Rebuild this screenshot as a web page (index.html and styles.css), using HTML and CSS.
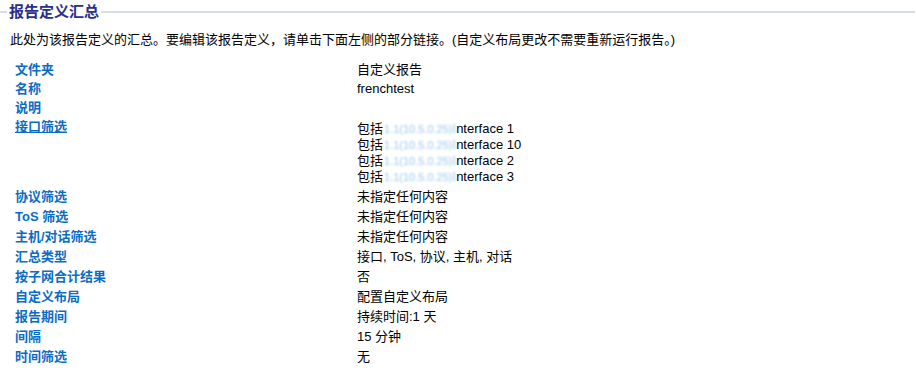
FILE: index.html
```html
<!DOCTYPE html>
<html lang="zh-CN">
<head>
<meta charset="utf-8">
<title>报告定义汇总</title>
<link rel="stylesheet" href="styles.css">
</head>
<body>
<div class="header">
  <span class="rule rule-left"></span>
  <h1 class="title">报告定义汇总</h1>
  <span class="rule rule-right"></span>
</div>
<p class="intro">此处为该报告定义的汇总。要编辑该报告定义，请单击下面左侧的部分链接。(自定义布局更改不需要重新运行报告。)</p>
<div class="summary">
  <div class="row row-tight"><div class="label">文件夹</div><div class="value">自定义报告</div></div>
  <div class="row row-tight"><div class="label">名称</div><div class="value">frenchtest</div></div>
  <div class="row row-tight"><div class="label">说明</div><div class="value"></div></div>
  <div class="row"><div class="label"><a class="link" href="#">接口筛选</a></div>
    <div class="value list">
      <div>包括<span class="blur">1.1(10.5.0.25)</span><span class="blur-edge">I</span>nterface 1</div>
      <div>包括<span class="blur">1.1(10.5.0.25)</span><span class="blur-edge">I</span>nterface 10</div>
      <div>包括<span class="blur">1.1(10.5.0.25)</span><span class="blur-edge">I</span>nterface 2</div>
      <div>包括<span class="blur">1.1(10.5.0.25)</span><span class="blur-edge">I</span>nterface 3</div>
    </div>
  </div>
  <div class="row"><div class="label">协议筛选</div><div class="value">未指定任何内容</div></div>
  <div class="row"><div class="label">ToS 筛选</div><div class="value">未指定任何内容</div></div>
  <div class="row"><div class="label">主机/对话筛选</div><div class="value">未指定任何内容</div></div>
  <div class="row"><div class="label">汇总类型</div><div class="value">接口, ToS, 协议, 主机, 对话</div></div>
  <div class="row"><div class="label">按子网合计结果</div><div class="value">否</div></div>
  <div class="row"><div class="label">自定义布局</div><div class="value">配置自定义布局</div></div>
  <div class="row"><div class="label">报告期间</div><div class="value">持续时间:1 天</div></div>
  <div class="row"><div class="label">间隔</div><div class="value">15 分钟</div></div>
  <div class="row"><div class="label">时间筛选</div><div class="value">无</div></div>
</div>
</body>
</html>
```
FILE: styles.css
```css
html, body {
  margin: 0;
  padding: 0;
  background: #ffffff;
}
body {
  font-family: "Liberation Sans", Arial, "Noto Sans CJK SC", sans-serif;
  font-size: 13px;
  color: #000000;
  width: 916px;
}
.header {
  display: flex;
  align-items: center;
  height: 22px;
  padding-top: 1px;
}
.rule {
  height: 2px;
  background: #d6dde5;
}
.rule-left {
  width: 7px;
  margin-right: 2px;
}
.rule-right {
  flex: 1;
  margin-left: 2px;
  margin-right: 1px;
}
.title {
  margin: 0;
  font-size: 15px;
  font-weight: bold;
  line-height: 20px;
  color: #2a2e8c;
  font-family: "Liberation Sans", "Noto Sans CJK SC", sans-serif;
}
.intro {
  margin: 9px 0 0 10px;
  line-height: 16px;
}
.summary {
  margin-top: 12px;
  margin-left: 15px;
}
.row {
  display: flex;
  padding: 2px 0;
  line-height: 16px;
}
.row-tight {
  padding: 2px 0 1px;
}
.label {
  width: 342px;
  flex: none;
  font-weight: bold;
  color: #0a6cc4;
}
.link {
  color: #0a6cc4;
  text-decoration: underline;
}
.value {
  flex: 1;
  min-height: 16px;
}
.list {
  padding-top: 2px;
}
.blur {
  display: inline-block;
  white-space: nowrap;
  vertical-align: top;
  color: #9cc6f0;
  filter: blur(1.3px);
  font-size: 11px;
  padding-left: 1px;
}
.blur-edge {
  color: #9cc6f0;
  filter: blur(1px);
  display: inline-block;
}
```
